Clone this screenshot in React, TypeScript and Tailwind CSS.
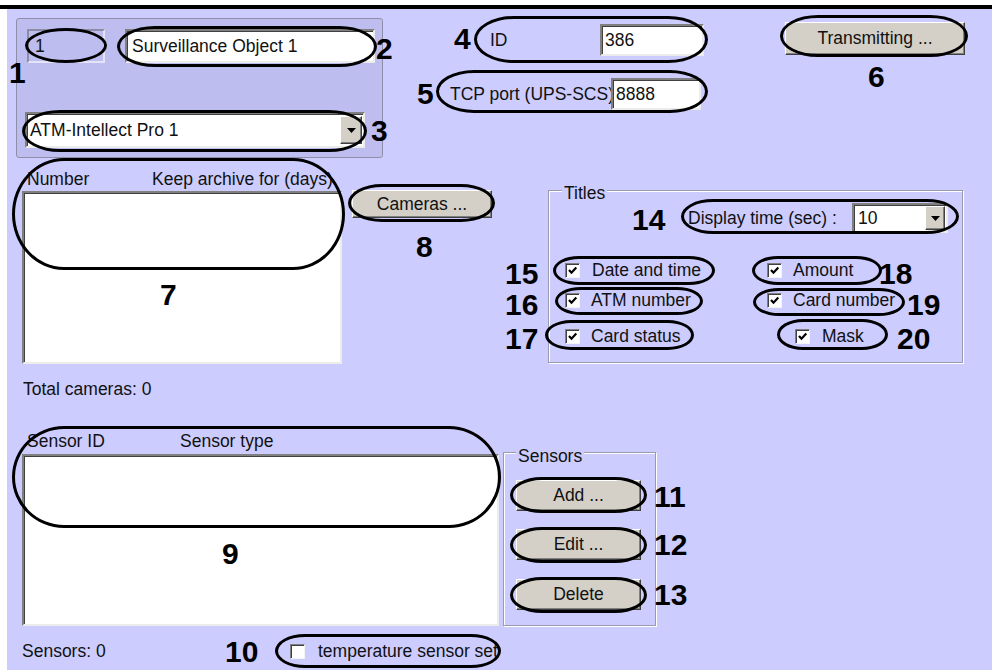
import React from "react";

const sunken =
  "border-2 border-t-[#808080] border-l-[#808080] border-r-[#ececec] border-b-[#ececec] shadow-[inset_1px_1px_0_#404040] bg-white";
const raised =
  "bg-[#d4d0c8] border border-t-white border-l-white border-r-[#404040] border-b-[#404040] shadow-[inset_-1px_-1px_0_#808080]";
const etched =
  "border border-[#9a9aae] shadow-[1px_1px_0_#ffffff,inset_1px_1px_0_#ffffff]";

function Tri() {
  return (
    <svg width="9" height="5" viewBox="0 0 9 5">
      <path d="M0 0 H9 L4.5 5 Z" fill="#000" />
    </svg>
  );
}

function Check({ checked }: { checked: boolean }) {
  return (
    <span className="w-[15px] h-[15px] shrink-0 bg-white border border-t-[#808080] border-l-[#808080] border-r-[#f4f4f4] border-b-[#f4f4f4] shadow-[inset_1px_1px_0_#404040] flex items-center justify-center">
      {checked && (
        <svg width="11" height="11" viewBox="0 0 11 11">
          <path d="M2 5 L4.5 7.7 L9.3 2.6" stroke="#000" strokeWidth="2.2" fill="none" />
        </svg>
      )}
    </span>
  );
}

function CheckItem({ label, checked = true, cls = "" }: { label: string; checked?: boolean; cls?: string }) {
  return (
    <div className={"flex items-center " + cls}>
      <Check checked={checked} />
      <span className="whitespace-nowrap">{label}</span>
    </div>
  );
}

const rings = [
  "rounded-[50%] left-[25px] top-[28px] w-[82px] h-[35px]",
  "rounded-[38px/50%] left-[117px] top-[26px] w-[260px] h-[41px]",
  "rounded-[38px/50%] left-[22px] top-[110px] w-[345px] h-[42px]",
  "rounded-[40px/50%] left-[474px] top-[16px] w-[234px] h-[47px]",
  "rounded-[38px/50%] left-[436px] top-[70px] w-[272px] h-[43px]",
  "rounded-[38px/50%] left-[780px] top-[15px] w-[188px] h-[42px]",
  "rounded-[52px/50%] left-[12px] top-[158px] w-[333px] h-[112px]",
  "rounded-[34px/50%] left-[348px] top-[184px] w-[147px] h-[38px]",
  "rounded-[52px/50%] left-[12px] top-[426px] w-[489px] h-[102px]",
  "rounded-[30px/50%] left-[275px] top-[634px] w-[226px] h-[34px]",
  "rounded-[32px/50%] left-[510px] top-[477px] w-[137px] h-[36px]",
  "rounded-[32px/50%] left-[510px] top-[527px] w-[137px] h-[36px]",
  "rounded-[32px/50%] left-[510px] top-[577px] w-[137px] h-[36px]",
  "rounded-[32px/50%] left-[681px] top-[199px] w-[278px] h-[35px]",
  "rounded-[26px/50%] left-[553px] top-[256px] w-[162px] h-[29px]",
  "rounded-[26px/50%] left-[555px] top-[287px] w-[148px] h-[28px]",
  "rounded-[26px/50%] left-[545px] top-[320px] w-[149px] h-[30px]",
  "rounded-[26px/50%] left-[752px] top-[256px] w-[130px] h-[29px]",
  "rounded-[26px/50%] left-[753px] top-[288px] w-[152px] h-[28px]",
  "rounded-[26px/50%] left-[777px] top-[319px] w-[111px] h-[31px]",
];

const labels: [string, string][] = [
  ["1", "left-[9px] top-[58px]"],
  ["2", "left-[376px] top-[34px]"],
  ["3", "left-[371px] top-[116px]"],
  ["4", "left-[454px] top-[24px]"],
  ["5", "left-[417px] top-[79px]"],
  ["6", "left-[868px] top-[62px]"],
  ["7", "left-[160px] top-[280px]"],
  ["8", "left-[416px] top-[232px]"],
  ["9", "left-[222px] top-[539px]"],
  ["10", "left-[225px] top-[637px]"],
  ["11", "left-[654px] top-[482px]"],
  ["12", "left-[654px] top-[530px]"],
  ["13", "left-[654px] top-[580px]"],
  ["14", "left-[632px] top-[205px]"],
  ["15", "left-[505px] top-[259px]"],
  ["16", "left-[505px] top-[290px]"],
  ["17", "left-[505px] top-[324px]"],
  ["18", "left-[879px] top-[259px]"],
  ["19", "left-[907px] top-[290px]"],
  ["20", "left-[897px] top-[324px]"],
];

export default function App() {
  return (
    <div className="relative w-[992px] h-[670px] overflow-hidden bg-white font-['Liberation_Sans',Arial,sans-serif] text-[17.5px] text-[#111]">
      <div className="h-[5px]" />
      <div className="h-[4px] bg-black" />
      <div className="flex h-[661px]">
        <div className="w-[7px] shrink-0 bg-white" />
        <div className="flex-1 bg-[#ccccff] flex flex-col">
          {/* Row A */}
          <div className="h-[151px] shrink-0 flex items-start">
            <div className="ml-[9px] mt-[9px] w-[367px] h-[140px] shrink-0 rounded-[3px] border border-[#8e8eaa] bg-[#bdbdef] pl-[10px] pt-[10px] flex flex-col">
              <div className="flex">
                <div className="w-[78px] h-[34px] shrink-0 border-2 border-t-[#8c8ca4] border-l-[#8c8ca4] border-r-[#e4e4f6] border-b-[#e4e4f6] flex items-center pl-[6px]">
                  1
                </div>
                <div className={"ml-[20px] w-[250px] h-[34px] shrink-0 flex items-center pl-[5px] " + sunken}>
                  Surveillance Object 1
                </div>
              </div>
              <div className={"mt-[49px] -ml-[2px] w-[340px] h-[36px] flex items-center " + sunken}>
                <span className="flex-1 pl-[3px]">ATM-Intellect Pro 1</span>
                <span className={"w-[22px] h-[28px] mr-[1px] flex items-center justify-center " + raised}>
                  <Tri />
                </span>
              </div>
            </div>
            <div className="ml-[62px] w-[260px] shrink-0 flex flex-col">
              <div className="mt-[15px] h-[32px] flex items-center">
                <span className="pl-[45px] w-[155px] shrink-0">ID</span>
                <div className={"w-[104px] h-[32px] shrink-0 flex items-center pl-[3px] " + sunken}>386</div>
              </div>
              <div className="mt-[22px] h-[32px] flex items-center">
                <span className="pl-[5px] w-[166px] shrink-0 whitespace-nowrap">TCP port (UPS-SCS)</span>
                <div className={"w-[90px] h-[32px] shrink-0 flex items-center pl-[3px] " + sunken}>8888</div>
              </div>
            </div>
            <div className={"ml-[80px] mt-[13px] w-[180px] h-[33px] shrink-0 flex items-center justify-center " + raised}>
              Transmitting ...
            </div>
          </div>

          {/* Row B */}
          <div className="h-[235px] shrink-0 flex items-start">
            <div className="ml-[15px] w-[320px] shrink-0 flex flex-col">
              <div className="mt-[8px] h-[22px] leading-[22px] flex pl-[5px] whitespace-nowrap">
                <span className="w-[125px] shrink-0">Number</span>
                <span>Keep archive for (days)</span>
              </div>
              <div className={"mt-[1px] h-[173px] " + sunken} />
              <div className="mt-[14px] h-[22px] leading-[22px] pl-[1px]">Total cameras: 0</div>
            </div>
            <div className={"ml-[10px] mt-[30px] w-[140px] h-[28px] shrink-0 flex items-center justify-center " + raised}>
              Cameras ...
            </div>
            <div className={"ml-[56px] mt-[30px] w-[415px] h-[173px] shrink-0 flex flex-col " + etched}>
              <span className="-mt-[8px] ml-[13px] px-[2px] h-[20px] leading-[20px] w-fit bg-[#ccccff]">Titles</span>
              <div className="h-[30px] flex items-center pl-[139px]">
                <span className="w-[164px] shrink-0 whitespace-nowrap">Display time (sec) :</span>
                <div className={"w-[96px] h-[30px] shrink-0 flex items-center " + sunken}>
                  <span className="flex-1 pl-[4px]">10</span>
                  <span className={"w-[20px] h-[24px] mr-[1px] flex items-center justify-center " + raised}>
                    <Tri />
                  </span>
                </div>
              </div>
              <div className="mt-[22px] h-[30px] flex items-center pl-[16px]">
                <CheckItem label="Date and time" cls="w-[202px] shrink-0 gap-[12px]" />
                <CheckItem label="Amount" cls="gap-[11px]" />
              </div>
              <div className="h-[30px] flex items-center pl-[16px]">
                <CheckItem label="ATM number" cls="w-[202px] shrink-0 gap-[11px]" />
                <CheckItem label="Card number" cls="gap-[11px]" />
              </div>
              <div className="mt-[6px] h-[30px] flex items-center pl-[16px]">
                <CheckItem label="Card status" cls="w-[202px] shrink-0 gap-[11px]" />
                <CheckItem label="Mask" cls="ml-[28px] gap-[12px]" />
              </div>
            </div>
          </div>

          {/* Row C */}
          <div className="flex-1 flex items-start">
            <div className="ml-[15px] w-[477px] shrink-0 flex flex-col">
              <div className="mt-[35px] h-[22px] leading-[22px] flex pl-[5px] whitespace-nowrap">
                <span className="w-[153px] shrink-0">Sensor ID</span>
                <span>Sensor type</span>
              </div>
              <div className={"mt-[2px] h-[172px] " + sunken} />
              <div className="mt-[14px] h-[22px] flex items-center">
                <span className="w-[268px] shrink-0 leading-[22px]">Sensors: 0</span>
                <CheckItem label="temperature sensor set" checked={false} cls="gap-[13px]" />
              </div>
            </div>
            <div className={"ml-[4px] mt-[57px] w-[153px] h-[174px] shrink-0 flex flex-col " + etched}>
              <span className="-mt-[7px] ml-[12px] px-[2px] h-[20px] leading-[20px] w-fit bg-[#ccccff]">Sensors</span>
              <div className={"mt-[14px] ml-[12px] w-[125px] h-[31px] flex items-center justify-center " + raised}>Add ...</div>
              <div className={"mt-[18px] ml-[12px] w-[125px] h-[31px] flex items-center justify-center " + raised}>Edit ...</div>
              <div className={"mt-[19px] ml-[12px] w-[125px] h-[31px] flex items-center justify-center " + raised}>Delete</div>
            </div>
          </div>
        </div>
      </div>

      {/* annotation layer */}
      <div className="absolute inset-0 pointer-events-none">
        {rings.map((c, i) => (
          <div key={i} className={"absolute border-[3px] border-black " + c} />
        ))}
        {labels.map(([t, c]) => (
          <span key={t} className={"absolute font-bold text-[30px] leading-none text-black " + c}>
            {t}
          </span>
        ))}
      </div>
    </div>
  );
}
